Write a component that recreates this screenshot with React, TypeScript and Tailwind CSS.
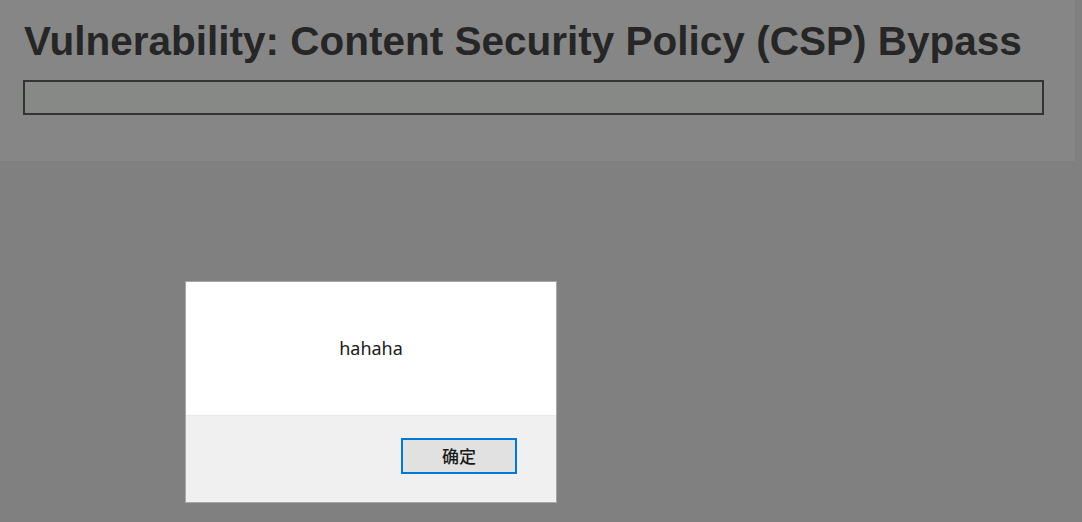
export default function App() {
    return (
        <div className="w-[1082px] h-[522px] bg-[#808080] overflow-hidden flex flex-col" style={{ fontFamily: '"Liberation Sans", Arial, sans-serif' }}>
            <div className="w-[1075px] h-[161px] bg-[#868686] pt-[18px] pl-[23px] shrink-0">
                <h1 className="text-[40.5px] leading-[46px] font-bold text-[#262626] pl-px">
                    Vulnerability: Content Security Policy (CSP) Bypass
                </h1>
                <div className="mt-[16px] w-[1021px] h-[35px] border-2 border-[#333333] bg-[#878987]" />
            </div>

            <div className="pl-[185px] pt-[120px]">
                <div className="w-[372px] h-[222px] border border-[#a8a8a8] bg-white flex flex-col">
                    <div className="h-[133px] flex items-center justify-center pb-[1px]">
                        <span className="text-[18px] text-[#1a1a1a]" style={{ fontFamily: '"Noto Sans", "Open Sans", sans-serif' }}>hahaha</span>
                    </div>
                    <div className="flex-1 bg-[#f0f0f0] border-t border-[#e8e8e8] flex justify-end pr-[39px] pt-[22px]">
                        <button className="w-[116px] h-[36px] border-2 border-[#0078d7] bg-[#e1e1e1] text-[17px] font-medium text-[#1a1a1a] flex items-center justify-center" style={{ fontFamily: '"Noto Sans CJK SC", sans-serif' }}>
                            确定
                        </button>
                    </div>
                </div>
            </div>
        </div>
    )
}
